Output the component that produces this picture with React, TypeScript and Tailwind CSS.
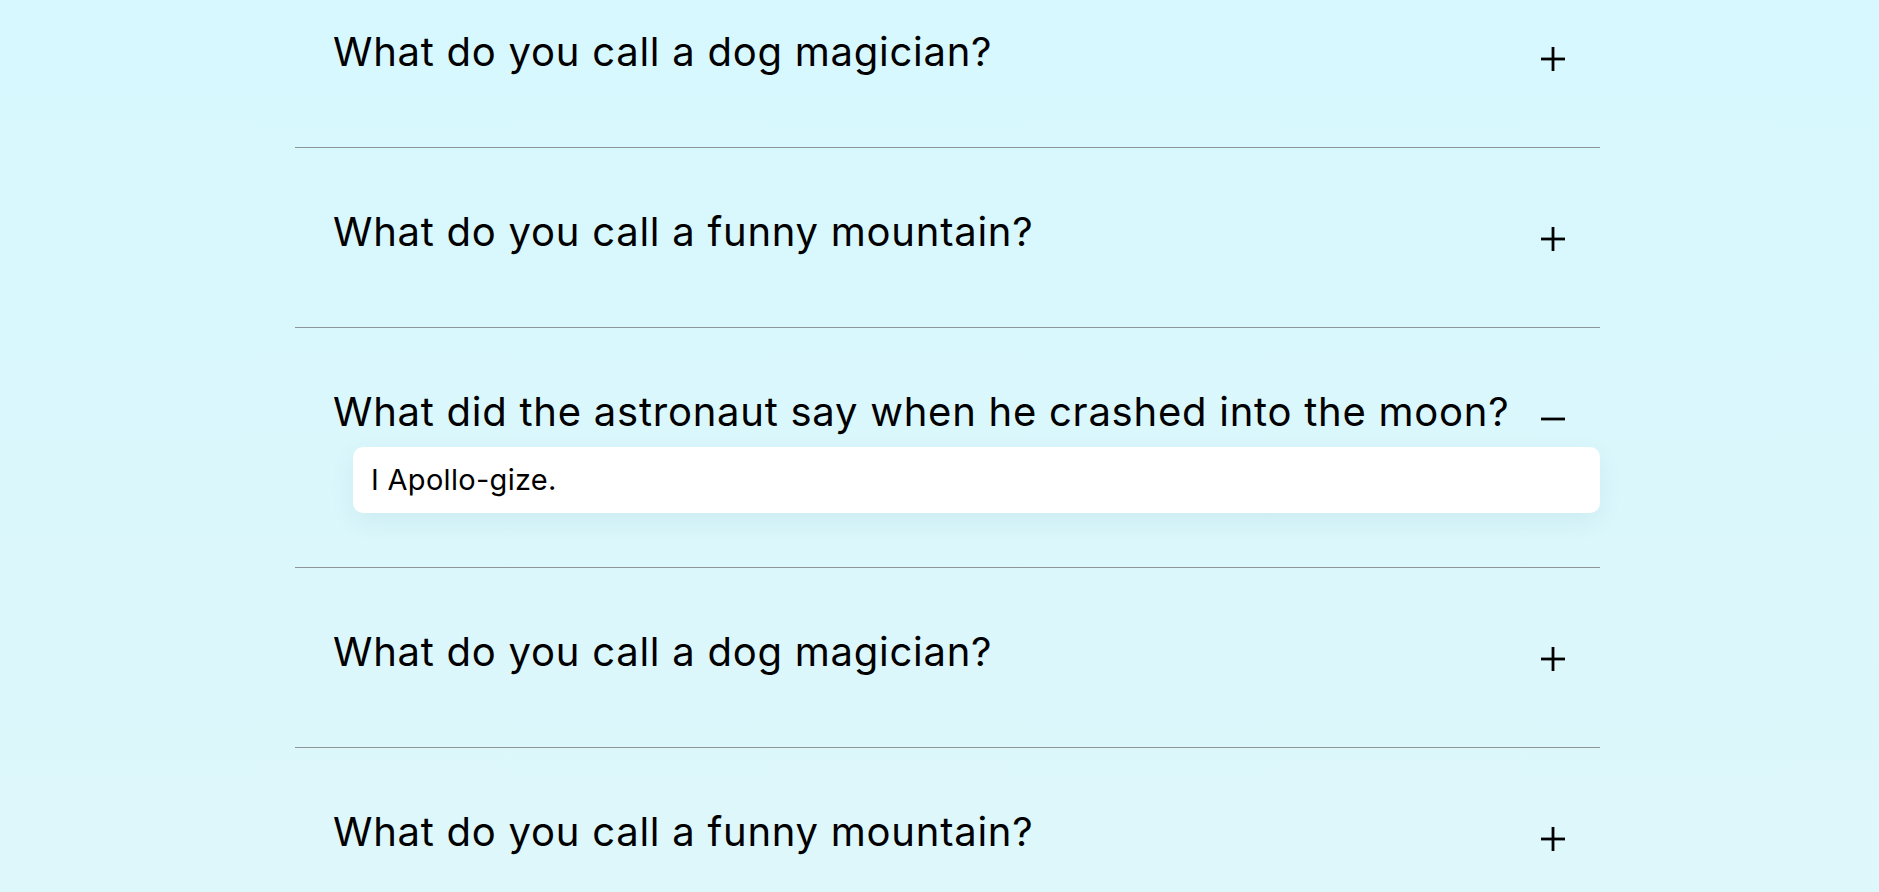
import { useState } from 'react'

type Joke = {
  id: number
  question: string
  answer: string
}

const jokes: Joke[] = [
  { id: 1, question: 'What do you call a dog magician?', answer: 'A labracadabrador.' },
  { id: 2, question: 'What do you call a funny mountain?', answer: 'Hill-arious.' },
  {
    id: 3,
    question: 'What did the astronaut say when he crashed into the moon?',
    answer: 'I Apollo-gize.',
  },
  { id: 4, question: 'What do you call a dog magician?', answer: 'A labracadabrador.' },
  { id: 5, question: 'What do you call a funny mountain?', answer: 'Hill-arious.' },
]

const ToggleIcon = ({ open }: { open: boolean }) => (
  <svg width="24" height="24" viewBox="0 0 24 24" className="shrink-0 mt-[25px]">
    <line x1="0" y1="12" x2="24" y2="12" stroke="#000" strokeWidth="2.8" />
    {!open && <line x1="12" y1="0" x2="12" y2="24" stroke="#000" strokeWidth="2.8" />}
  </svg>
)

const App = () => {
  const [openId, setOpenId] = useState<number | null>(3)

  return (
    <div
      className="min-h-screen pl-4 bg-gradient-to-b from-[#d6f8fe] to-[#def7fa] text-black"
      style={{ fontFamily: 'Inter, "Open Sans", sans-serif' }}
    >
      <div className="w-[1305px] mx-auto -mt-8">
        {jokes.map((joke) => {
          const open = openId === joke.id
          return (
            <div
              key={joke.id}
              className={`border-b border-[#8e9599] pt-[54px] ${open ? 'pb-[54px]' : 'pb-[65px]'}`}
            >
              <button
                type="button"
                onClick={() => setOpenId(open ? null : joke.id)}
                className="w-full flex items-start justify-between pl-[38px] pr-[35px] text-left cursor-pointer"
              >
                <span className="text-[40px] leading-[60px] font-normal tracking-[0.75px]">
                  {joke.question}
                </span>
                <ToggleIcon open={open} />
              </button>
              {open && (
                <div className="ml-[58px] mt-[5px] bg-white rounded-[10px] pl-[18px] pr-5 py-[10px] shadow-[0_8px_26px_rgba(0,80,100,0.07)]">
                  <p className="text-[29px] leading-[46px] tracking-[0.3px]">{joke.answer}</p>
                </div>
              )}
            </div>
          )
        })}
      </div>
    </div>
  )
}

export default App
